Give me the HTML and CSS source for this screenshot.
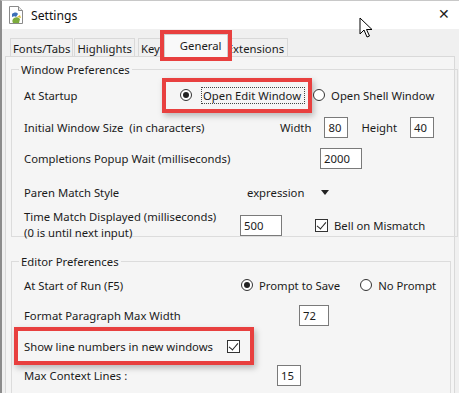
FILE: index.html
```html
<!DOCTYPE html>
<html lang="en">
<head>
  <meta charset="UTF-8">
  <title>Settings</title>
  <link rel="stylesheet" href="styles.css">
</head>
<body>
  <div class="window">
    <div class="titlebar">
      <svg class="app-icon" width="16" height="18" viewBox="0 0 16 18">
        <path d="M1.5 0.5h9l4 4v13h-13z" fill="#fff" stroke="#8a8a8a"/>
        <path d="M10.5 0.5v4h4" fill="#e6e6e6" stroke="#8a8a8a"/>
        <path d="M4 8c2-2 5-2 6 0l-2 3c-1-1-2-1-4 0z" fill="#3d6fb6"/>
        <path d="M6 12c2-1 4-1 6 1l-1 4h-6c-1-2-1-3 1-5z" fill="#7cab3c"/>
        <path d="M9 11l3-2 1 3z" fill="#e0c12e"/>
      </svg>
      <span class="title">Settings</span>
      <span class="close">&#x2715;</span>
      <svg class="cursor" width="14" height="21" viewBox="0 0 14 21">
        <path d="M1 1v16l4-4 3 7 2.5-1-3-6.5h5.5z" fill="#fff" stroke="#000" stroke-width="1"/>
      </svg>
    </div>

    <div class="tabs">
      <span class="tab">Fonts/Tabs</span>
      <span class="tab">Highlights</span>
      <span class="tab tab-key">Key</span>
      <span class="tab active">General</span>
      <span class="tab tab-ext">Extensions</span>
    </div>

    <div class="notebook">
      <fieldset class="group group-window">
        <legend>Window Preferences</legend>

        <div class="row row-startup">
          <span class="label w-startup">At Startup</span>
          <span class="mark mark-startup">
            <span class="radio on"></span>
            <span class="focus">Open Edit Window</span>
          </span>
          <span class="radio"></span>
          <span>Open Shell Window</span>
        </div>

        <div class="row row-size">
          <span class="label w-size">Initial Window Size&nbsp; (in characters)</span>
          <span>Width</span>
          <span class="entry small">80</span>
          <span>Height</span>
          <span class="entry small">40</span>
        </div>

        <div class="row row-popup">
          <span class="label w-popup">Completions Popup Wait (milliseconds)</span>
          <span class="entry wide">2000</span>
        </div>

        <div class="row row-paren">
          <span class="label w-paren">Paren Match Style</span>
          <span class="combo">expression</span>
          <span class="arrow"></span>
        </div>

        <div class="row row-time">
          <span class="label w-time">Time Match Displayed (milliseconds)<br>(0 is until next input)</span>
          <span class="entry wide">500</span>
          <span class="check"></span>
          <span>Bell on Mismatch</span>
        </div>
      </fieldset>

      <fieldset class="group group-editor">
        <legend>Editor Preferences</legend>

        <div class="row row-run">
          <span class="label w-run">At Start of Run (F5)</span>
          <span class="radio on"></span>
          <span>Prompt to Save</span>
          <span class="radio radio-second"></span>
          <span>No Prompt</span>
        </div>

        <div class="row row-format">
          <span class="label w-format">Format Paragraph Max Width</span>
          <span class="entry mid">72</span>
        </div>

        <div class="row row-lines">
          <span class="mark mark-lines">
            <span class="label w-lines">Show line numbers in new windows</span>
            <span class="check"></span>
          </span>
        </div>

        <div class="row row-context">
          <span class="label w-context">Max Context Lines :</span>
          <span class="entry small">15</span>
        </div>
      </fieldset>
    </div>
  </div>
</body>
</html>
```

FILE: styles.css
```css
* {
  box-sizing: border-box;
}

body {
  margin: 0;
  background: #f0f0f0;
  font-family: "Noto Sans", "Open Sans", sans-serif;
  font-size: 11.3px;
  color: #1b1b1b;
}

.window {
  width: 459px;
  height: 393px;
  overflow: hidden;
  border-left: 2px solid #8c8c8c;
  border-top: 1px solid #c8c8c8;
  background: #f0f0f0;
}

/* title bar */
.titlebar {
  position: relative;
  height: 28px;
  background: #fff;
  display: flex;
  align-items: center;
  padding-left: 6px;
}

.app-icon {
  margin-right: 7px;
}

.title {
  font-size: 12.2px;
  color: #111;
}

.close {
  margin-left: auto;
  margin-right: 9px;
  margin-bottom: 3px;
  font-size: 14px;
  color: #222;
}

.cursor {
  position: absolute;
  left: 357px;
  top: 16px;
}

/* tabs */
.tabs {
  display: flex;
  align-items: flex-end;
  height: 27px;
  padding-left: 8px;
}

.tab {
  height: 18px;
  line-height: 20px;
  padding: 0 2px;
  border: 1px solid #d9d9d9;
  border-bottom: none;
  background: #f0f0f0;
  margin-right: 1px;
}

.tab-key {
  margin-left: 2px;
  margin-right: 0;
}

.tab.active {
  position: relative;
  height: 23px;
  line-height: 22px;
  width: 64px;
  padding-left: 15px;
  background: #f9f9f9;
  border-color: #d0d0d0;
  margin: 0 0 -1px 1px;
  box-shadow: 0 0 0 4px #e8403f;
}

.tab-ext {
  margin-left: -4px;
  padding-right: 3px;
}

.notebook {
  height: 400px;
  margin-left: 3px;
  margin-right: 4px;
  border: 1px solid #d9d9d9;
  background: #f5f5f5;
  padding: 5px 3px 0 5px;
}

/* group boxes */
.group {
  margin: 0;
  border: 1px solid #dcdcdc;
  padding: 0 10px 0 12px;
}

.group legend {
  padding: 0 2px;
  margin-left: -5px;
}

.group-window {
  height: 175px;
}

.group-editor {
  margin-top: 17px;
  height: 150px;
}

.row {
  display: flex;
  align-items: center;
}

.label {
  flex: none;
}

.w-startup { width: 142px; }
.w-size { width: 256px; }
.w-popup { width: 296px; }
.w-paren { width: 223px; }
.w-time { width: 216px; line-height: 16px; }
.w-run { width: 217px; }
.w-format { width: 275px; }
.w-lines { width: 203px; }
.w-context { width: 253px; }

.row-startup { height: 26px; margin-top: 5px; }
.row-size { height: 24px; margin-top: 7px; }
.row-popup { height: 24px; margin-top: 7px; }
.row-paren { height: 24px; margin-top: 10px; }
.row-time { height: 32px; margin-top: 5px; }

.row-run { height: 24px; margin-top: 4px; }
.row-format { height: 24px; margin-top: 6px; }
.row-lines { height: 28px; margin-top: 5px; }
.row-context { height: 24px; margin-top: 3px; }

/* red annotation frames */
.mark {
  display: inline-flex;
  align-items: center;
  box-shadow: 0 0 0 4px #e8403f, 2px 3px 6px 4px rgba(0, 0, 0, 0.25);
  background: #f5f5f5;
}

.mark-startup {
  height: 27px;
  padding: 0 4px 0 14px;
  margin-right: 5px;
}

.mark-lines {
  height: 30px;
  margin-left: -6px;
  padding: 0 10px 0 6px;
}

.focus {
  outline: 1px dotted #444;
  padding: 0 3px 0 1px;
  margin-left: 4px;
}

/* controls */
.radio {
  flex: none;
  width: 12px;
  height: 12px;
  border: 1px solid #333;
  border-radius: 50%;
  background: #fff;
  margin-right: 6px;
  position: relative;
}

.radio.on::after {
  content: "";
  position: absolute;
  left: 2px;
  top: 2px;
  width: 6px;
  height: 6px;
  border-radius: 50%;
  background: #222;
}

.radio-second {
  margin-left: 20px;
}

.check {
  flex: none;
  width: 13px;
  height: 13px;
  border: 1px solid #333;
  background: #fff;
  position: relative;
}

.check::after {
  content: "";
  position: absolute;
  left: 3px;
  top: 0;
  width: 4px;
  height: 8px;
  border: solid #222;
  border-width: 0 1.5px 1.5px 0;
  transform: rotate(40deg);
}

.row-time .check {
  margin-left: 33px;
  margin-right: 6px;
}

.entry {
  flex: none;
  height: 21px;
  line-height: 19px;
  border: 1px solid #7a7a7a;
  background: #fff;
  padding: 0 3px;
}

.entry.small { width: 24px; }
.entry.mid { width: 30px; }
.entry.wide { width: 42px; }

.row-size .entry { margin: 0 13px; }

.combo {
  padding-right: 17px;
}

.arrow {
  width: 0;
  height: 0;
  border-left: 4px solid transparent;
  border-right: 4px solid transparent;
  border-top: 5px solid #222;
}
```
